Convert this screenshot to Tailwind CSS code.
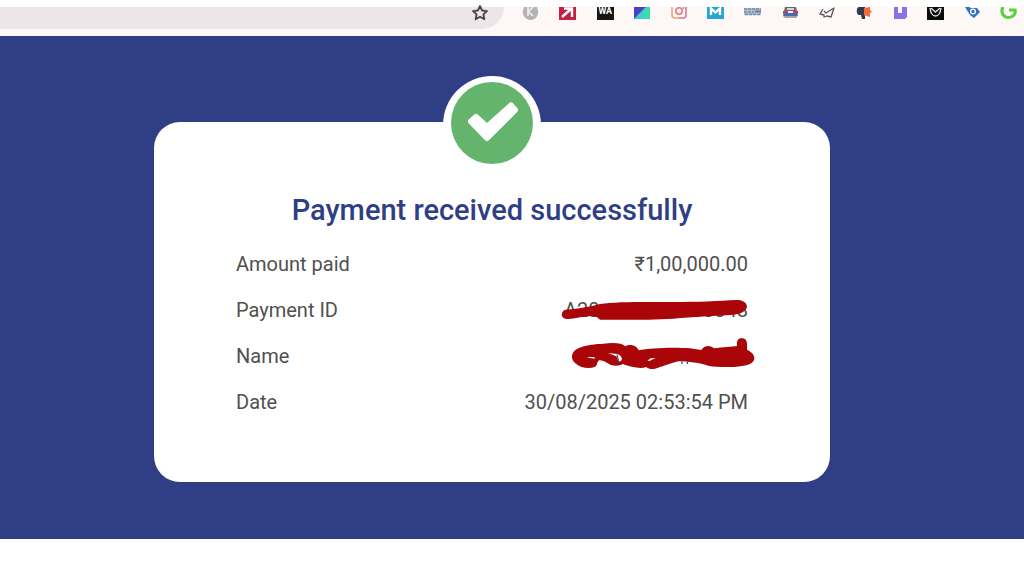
<!DOCTYPE html>
<html lang="en">
<head>
<meta charset="utf-8">
<meta name="viewport" content="width=device-width, initial-scale=1">
<title>Payment received</title>
<script src="https://cdn.jsdelivr.net/npm/@tailwindcss/browser@4"></script>
</head>
<body class="flex min-h-screen flex-col bg-white font-['Roboto',sans-serif]">
<header class="mt-[7px] flex h-[29px] items-start bg-[#fdf7f5]">
  <div class="flex h-[22px] w-[504px] justify-end rounded-br-[22px] bg-[#ece6e8] pr-4">
    <button type="button" aria-label="Bookmark this page" class="h-4 w-4"><svg class="-mt-1" viewBox="0 0 16 16" width="16" height="16" fill="none" stroke="#454347" stroke-width="1.8" stroke-linejoin="round"><path d="M8 1l2.100 4.500 4.900.6-3.600 3.300 1 4.800L8 11.800l-4.400 2.400 1-4.800L1 6.100l4.900-.6z"/></svg></button>
  </div>
  <nav aria-label="Bookmarks" class="flex flex-1 justify-between pl-[18px] pr-[7px]">
    <button type="button" aria-label="K"><svg width="17" height="14" viewBox="0 0 17 14"><path d="M2 0C-1 6 2 13 8.500 13S18 6 15 0z" fill="#b5b4b4"/><path d="M6 0v9M11 0L6.500 4.500 11 9" stroke="#f1eeee" stroke-width="1.700" fill="none"/></svg></button>
    <button type="button" aria-label="Arrow"><svg width="17" height="14" viewBox="0 0 17 14"><path d="M0 0h17v13H0z" fill="#c41f45"/><path d="M3 10l9-8M5 1.500h8V10" stroke="#fff" stroke-width="2.400" fill="none"/></svg></button>
    <button type="button" class="flex h-[13px] w-[17px] items-center justify-center overflow-hidden bg-[#151515] text-[9px] leading-none font-bold text-white"><span class="mb-1">WA</span></button>
    <button type="button" aria-label="Gradient"><svg width="16" height="14" viewBox="0 0 16 14"><path d="M0 0h16v12H0z" fill="#38dda9"/><path d="M0 0h12L0 12z" fill="#4a3fc5"/><path d="M0 12L11 1 8 12z" fill="#42c9d8"/></svg></button>
    <button type="button" aria-label="Instagram"><svg width="16" height="14" viewBox="0 0 16 14" fill="none" stroke="#e5797e" stroke-width="1.500"><path d="M1 0v8a3 3 0 0 0 3 3h8a3 3 0 0 0 3-3V0" stroke="#eba078"/><path d="M15 0v8a3 3 0 0 1-3 3H8" stroke="#d986b6"/><circle cx="8" cy="4" r="3.200"/><path d="M12.500 0v2"/></svg></button>
    <button type="button" aria-label="M"><svg width="17" height="14" viewBox="0 0 17 14"><path d="M0 0h17v12H0z" fill="#27a5d6"/><path d="M4 8V1.500l4.500 4L13 1.500V8" stroke="#fff" stroke-width="2.400" fill="none"/></svg></button>
    <button type="button" aria-label="Exam portal"><svg width="17" height="14" viewBox="0 0 17 14"><path d="M0 1h17v7H0z" fill="#b4c0d0"/><path d="M0 2h17M0 5h10M1 7.500h15" fill="none" stroke="#758ba8" stroke-width="1.600" stroke-dasharray="3 1"/><path d="M11 4.500h6" stroke="#6680a0" stroke-width="2"/></svg></button>
    <button type="button" aria-label="Train"><svg width="17" height="14" viewBox="0 0 17 14"><path d="M3 0h11l1 4H2z" fill="#6c6873"/><path d="M5 1h7v2H5z" fill="#d9d5de"/><path d="M1 4h15v3H1z" fill="#ce3c4c"/><path d="M2 6h13l1 3H1z" fill="#436bb5"/><path d="M6 4h5v2H6z" fill="#eee"/><path d="M1 9h15l-2 2H3z" fill="#a8a3ab"/></svg></button>
    <button type="button" aria-label="Paper plane"><svg width="17" height="14" viewBox="0 0 17 14" fill="none" stroke="#59595b" stroke-width="1.300" stroke-linejoin="round"><path d="M4 2L1 7l4 1v2l3-1 4 1 3-9-8 5-2-2"/></svg></button>
    <button type="button" aria-label="Megaphone"><svg width="17" height="14" viewBox="0 0 17 14"><path d="M8 0H3C0 0 0 8 3 8h2l1 4h3V0z" fill="#33394c"/><path d="M8 1l6-1v3l2 2-2 1v4L8 8z" fill="#f16b3d"/></svg></button>
    <button type="button" aria-label="U"><svg width="13" height="14" viewBox="0 0 13 14"><path d="M0 0h4v6h4V0h5v10l-2 2H0z" fill="#8672ea"/></svg></button>
    <button type="button" aria-label="Envelope"><svg width="17" height="14" viewBox="0 0 17 14"><path d="M0 0h17v13H0z" fill="#0b0b0b"/><path d="M3 1q1 8 5.500 8T14 1M4 1l4.500 4L13 1" stroke="#ddd" stroke-width="1.400" fill="none"/></svg></button>
    <button type="button" aria-label="Tag"><svg width="15" height="14" viewBox="0 0 15 14"><path d="M0 0h4l2 1h6l3 4-6 6-4-3z" fill="#2c72c7"/><circle cx="8" cy="4.500" r="2.400" fill="none" stroke="#fff" stroke-width="1.300"/></svg></button>
    <button type="button" aria-label="C"><svg width="17" height="14" viewBox="0 0 17 14"><path d="M3 0C0 6 4 10.500 8.500 10.500S16 7 15 3H9" fill="none" stroke="#58d33f" stroke-width="3.200"/></svg></button>
  </nav>
</header>
<main class="bg-[#303f85] pt-10 pr-10 pb-[57px]">
  <div class="mx-auto flex max-w-[676px] flex-col items-center">
    <div class="relative z-10 -mb-[52px] h-[98px] w-[98px] rounded-full bg-white px-2 pt-1.5">
      <svg viewBox="0 0 82 82" width="82" height="82" role="img" aria-label="Success"><circle cx="41" cy="41" r="41" fill="#64b46e"/><path d="M20 39.500L25 35L36 45L60 23.500L64 28L36 56z" fill="#fff" stroke="#fff" stroke-width="6" stroke-linejoin="round"/></svg>
    </div>
    <section class="w-full rounded-[26px] bg-white px-[82px] pt-[68px] pb-[57px]">
      <h1 class="text-center text-[29px] leading-10 font-medium whitespace-nowrap text-[#303f85]">Payment received successfully</h1>
      <dl class="mt-[11px] text-xl text-[#505050]">
        <div class="flex h-[46px] items-center justify-between"><dt>Amount paid</dt><dd>₹1,00,000.00</dd></div>
        <div class="flex h-[46px] items-center justify-between"><dt>Payment ID</dt><dd class="relative flex w-[184px] justify-between"><span>A20</span><span>00048</span>
          <svg class="absolute -top-1 -left-6" width="230" height="36" viewBox="0 6 690 108" aria-hidden="true"><path d="M76 59C110 57 145 52 180 42C230 34 330 36 400 36C470 36 540 33 590 30C614 28 626 47 618 58C608 72 590 74 560 76C520 78 460 81 400 86C330 90 240 90 180 89C173 85 172 80 160 79C130 77 110 86 84 87C60 88 61 64 76 59Z" fill="#aa0609"/></svg></dd></div>
        <div class="flex h-[46px] items-center justify-between"><dt>Name</dt><dd class="-mr-[7px]">
          <svg width="184" height="36" viewBox="93 144 552 108" role="img" aria-label="Name hidden"><path d="M96 198C98 172 140 163 190 161C225 157 246 160 256 169C270 160 292 167 296 181C330 174 400 171 450 175L484 180C492 164 514 165 522 175C550 171 575 171 591 168C589 151 595 144 606 145C622 145 622 160 621 179C642 188 650 206 636 218C620 232 545 235 505 227C480 219 445 214 415 214C385 222 365 231 345 236C332 240 323 234 318 231C300 238 272 230 248 222C240 228 224 229 211 224C200 219 190 210 178 211C169 215 174 227 164 231C145 238 120 232 108 221C99 214 95 207 96 198Z" fill="#aa0609"/><path d="M140 201h22l4 5-16-2zM204 189l28 3q17 7 13 19l-9 5-7-17zM322 212l10-7 15-1-19 9z" fill="#fff"/><path d="M231 194l5 22M426 214v8M442 214v8M477 216v4" fill="none" stroke="#50506a" stroke-width="4"/></svg></dd></div>
        <div class="flex h-[46px] items-center justify-between"><dt>Date</dt><dd>30/08/2025 02:53:54 PM</dd></div>
      </dl>
    </section>
  </div>
</main>
</body>
</html>
